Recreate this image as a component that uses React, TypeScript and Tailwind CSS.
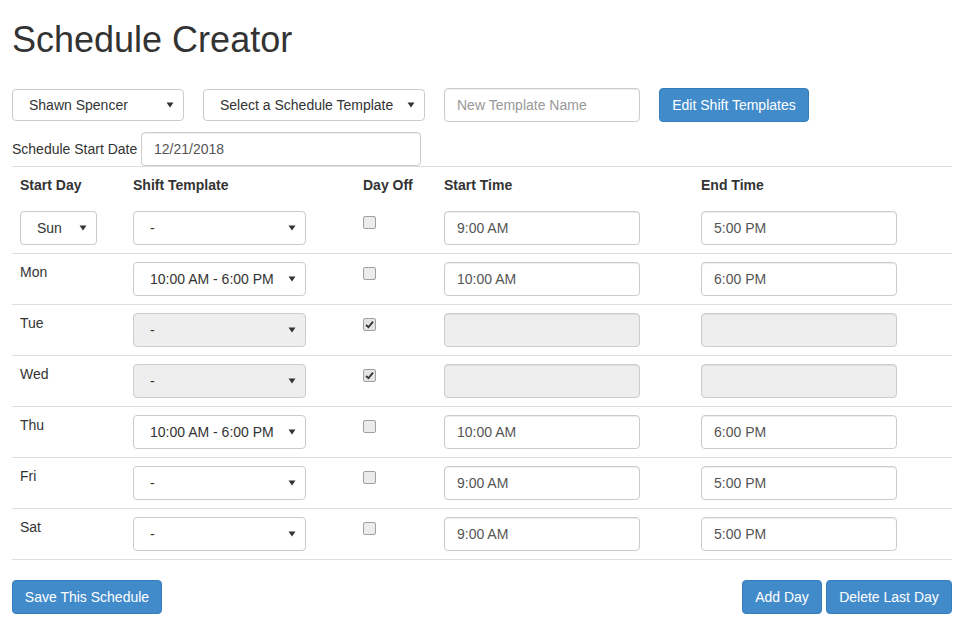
// Schedule creator: employee + template pickers, a day-by-day shift table, and actions.
const FONT = "font-['Liberation_Sans',Arial,Helvetica,sans-serif]";

type Day = {
  label: string;
  template: string;
  off: boolean;
  start: string;
  end: string;
};

const DAYS: Day[] = [
  { label: 'Sun', template: '-', off: false, start: '9:00 AM', end: '5:00 PM' },
  { label: 'Mon', template: '10:00 AM - 6:00 PM', off: false, start: '10:00 AM', end: '6:00 PM' },
  { label: 'Tue', template: '-', off: true, start: '', end: '' },
  { label: 'Wed', template: '-', off: true, start: '', end: '' },
  { label: 'Thu', template: '10:00 AM - 6:00 PM', off: false, start: '10:00 AM', end: '6:00 PM' },
  { label: 'Fri', template: '-', off: false, start: '9:00 AM', end: '5:00 PM' },
  { label: 'Sat', template: '-', off: false, start: '9:00 AM', end: '5:00 PM' },
];

function Caret() {
  return (
    <svg width="8" height="6" viewBox="0 0 8 6" className="shrink-0">
      <path d="M0.5 0.5 H7.5 L4 5.5 Z" fill="#333" />
    </svg>
  );
}

function FakeSelect({
  value,
  className,
  disabled,
}: {
  value: string;
  className: string;
  disabled?: boolean;
}) {
  return (
    <div
      className={`flex items-center justify-between rounded-[4px] border border-[#ccc] pl-[16px] pr-[9px] text-[#333] ${
        disabled ? 'bg-[#eee]' : 'bg-white'
      } ${className}`}
    >
      <span className="truncate">{value}</span>
      <Caret />
    </div>
  );
}

function TextInput({
  value,
  placeholder,
  className,
  disabled,
}: {
  value?: string;
  placeholder?: string;
  className: string;
  disabled?: boolean;
}) {
  return (
    <input
      readOnly
      disabled={disabled}
      value={value ?? ''}
      placeholder={placeholder}
      className={`rounded-[4px] border border-[#ccc] px-[12px] text-[14px] text-[#555] shadow-[inset_0_1px_1px_rgba(0,0,0,0.075)] outline-none placeholder:text-[#999] ${
        disabled ? 'bg-[#eee]' : 'bg-white'
      } ${className}`}
    />
  );
}

function CheckBox({ checked }: { checked: boolean }) {
  return (
    <span
      className={`mt-[5px] flex h-[13px] w-[13px] items-center justify-center rounded-[2px] border border-[#a0a0a0] ${
        checked ? 'bg-[#e4e4e4]' : 'bg-[#ececec]'
      }`}
    >
      {checked ? (
        <svg width="9" height="9" viewBox="0 0 9 9">
          <path d="M1 4.8 L3.4 7.2 L8 1.6" fill="none" stroke="#333" strokeWidth="1.8" />
        </svg>
      ) : null}
    </span>
  );
}

function BlueButton({ children, className = '' }: { children: string; className?: string }) {
  return (
    <button
      type="button"
      className={`h-[34px] whitespace-nowrap rounded-[4px] border border-[#357ebd] bg-[#428bca] px-[8px] text-[14px] text-white ${className}`}
    >
      {children}
    </button>
  );
}

const COLS = 'grid grid-cols-[113px_230px_81px_257px_259px]';

export default function App() {
  return (
    <div className={`${FONT} px-[12px] text-[14px] leading-[20px] text-[#333]`}>
      <h1 className="mb-[28px] mt-[20px] text-[36px] leading-[40px] font-normal">Schedule Creator</h1>

      <div className="flex items-start gap-[19px]">
        <FakeSelect value="Shawn Spencer" className="mt-px h-[32px] w-[172px]" />
        <FakeSelect value="Select a Schedule Template" className="mt-px h-[32px] w-[222px]" />
        <TextInput placeholder="New Template Name" className="h-[34px] w-[196px]" />
        <BlueButton className="w-[150px]">Edit Shift Templates</BlueButton>
      </div>

      <div className="mt-[10px] flex items-center gap-[4px]">
        <label className="w-[125px] whitespace-nowrap">Schedule Start Date</label>
        <TextInput value="12/21/2018" className="h-[34px] w-[280px]" />
      </div>

      <div className="w-[940px] border-t border-[#ddd]">
        <div className={`${COLS} font-bold`}>
          <div className="p-[8px]">Start Day</div>
          <div className="p-[8px]">Shift Template</div>
          <div className="p-[8px]">Day Off</div>
          <div className="p-[8px]">Start Time</div>
          <div className="p-[8px]">End Time</div>
        </div>

        {DAYS.map((d, i) => (
          <div key={d.label} className={`${COLS} border-b border-[#ddd]`}>
            <div className="p-[8px]">
              {i === 0 ? (
                <FakeSelect value={d.label} className="h-[34px] w-[77px]" />
              ) : (
                <span>{d.label}</span>
              )}
            </div>
            <div className="p-[8px]">
              <FakeSelect value={d.template} disabled={d.off} className="h-[34px] w-[173px]" />
            </div>
            <div className="p-[8px]">
              <CheckBox checked={d.off} />
            </div>
            <div className="p-[8px]">
              <TextInput value={d.start} disabled={d.off} className="h-[34px] w-[196px]" />
            </div>
            <div className="p-[8px]">
              <TextInput value={d.end} disabled={d.off} className="h-[34px] w-[196px]" />
            </div>
          </div>
        ))}
      </div>

      <div className="mt-[20px] flex w-[940px] items-center justify-between">
        <BlueButton className="w-[150px]">Save This Schedule</BlueButton>
        <div className="flex gap-[4px]">
          <BlueButton className="w-[80px]">Add Day</BlueButton>
          <BlueButton className="w-[126px]">Delete Last Day</BlueButton>
        </div>
      </div>
    </div>
  );
}
